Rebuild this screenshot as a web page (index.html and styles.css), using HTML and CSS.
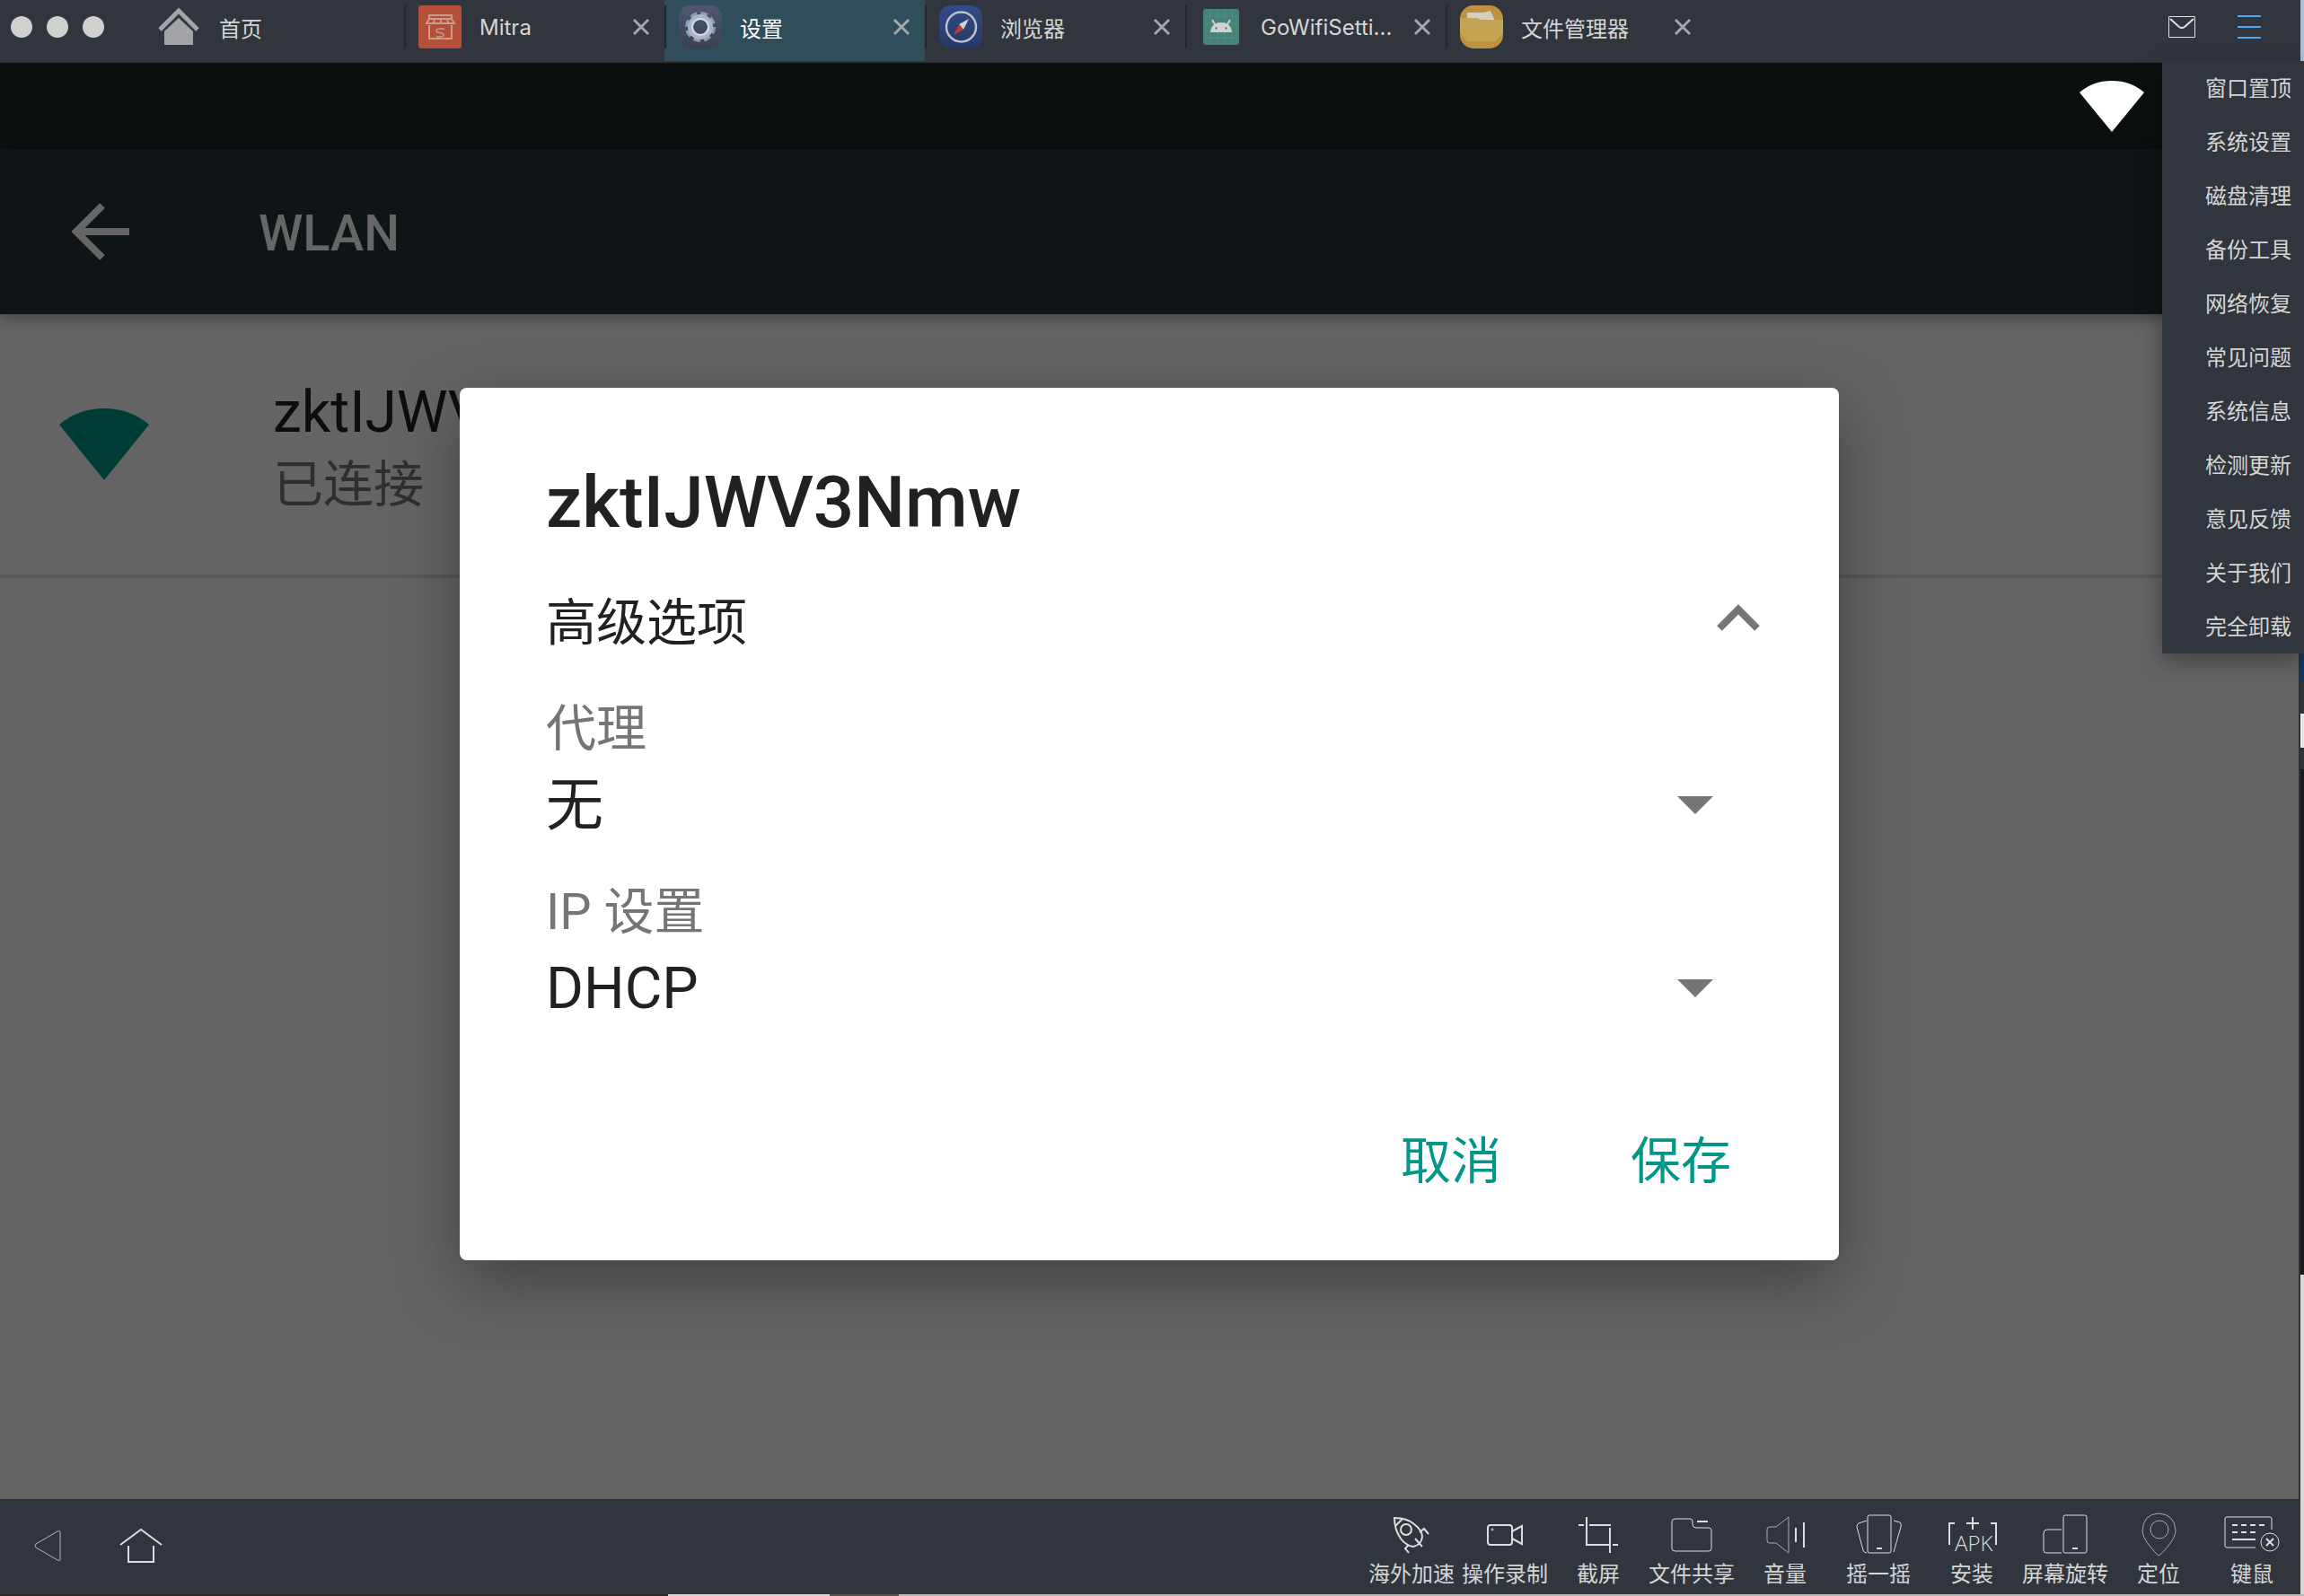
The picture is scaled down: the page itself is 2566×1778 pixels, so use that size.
FILE: index.html
```html
<!DOCTYPE html>
<html lang="zh-CN">
<head>
<meta charset="utf-8">
<title>WLAN</title>
<link rel="stylesheet" href="styles.css">
</head>
<body class="desktop">
<div class="window">
  <header class="titlebar">
    <div class="window-controls">
      <button class="dot" aria-label="关闭"></button>
      <button class="dot" aria-label="最小化"></button>
      <button class="dot" aria-label="缩放"></button>
    </div>
    <nav class="tabs">
      <div class="tab tab-home">
        <button class="tab-main">
          <svg class="tab-icon" viewBox="0 0 48 48"><path d="M2 27 23 6 44 27" fill="none" stroke="#a2a4a7" stroke-width="5"/><path d="M23 14 39 29V44H7V29Z" fill="#a2a4a7"/></svg>
          <span>首页</span>
        </button>
      </div>
      <div class="tab">
        <button class="tab-main">
          <svg class="tab-icon" viewBox="0 0 48 48"><rect width="48" height="48" rx="3" fill="#b4503a"/><g fill="none" stroke="#cf9a8e" stroke-width="2"><path d="M12 11H37V15H12ZM12 15 9 20H40L37 15M12 22V37H37V22M18 15l-1 5M25 15v5M32 15l1 5"/><path d="M29 26H24Q20 26 20 28T24 30.500T28 33T24 35H20" stroke-width="1.500"/></g></svg>
          <span>Mitra</span>
        </button>
        <button class="tab-close" aria-label="关闭 Mitra"><svg viewBox="0 0 20 20"><path d="M2 2 18 18M18 2 2 18"/></svg></button>
      </div>
      <div class="tab tab-active">
        <button class="tab-main">
          <svg class="tab-icon" viewBox="0 0 48 48"><defs><linearGradient id="gear-bg" x2="0" y2="1"><stop stop-color="#505770"/><stop offset="1" stop-color="#3b4150"/></linearGradient></defs><rect width="48" height="48" rx="13" fill="url(#gear-bg)"/><circle cx="24" cy="24" r="14" fill="none" stroke="#8c9ab6" stroke-width="6" stroke-dasharray="7 4"/><circle cx="24" cy="24" r="11" fill="none" stroke="#a9b4ca" stroke-width="6"/><circle cx="24" cy="24" r="9" fill="none" stroke="#dadde6" stroke-width="2"/></svg>
          <span>设置</span>
        </button>
        <button class="tab-close" aria-label="关闭 设置"><svg viewBox="0 0 20 20"><path d="M2 2 18 18M18 2 2 18"/></svg></button>
      </div>
      <div class="tab">
        <button class="tab-main">
          <svg class="tab-icon" viewBox="0 0 48 48"><defs><linearGradient id="nav-bg" x2="0" y2="1"><stop stop-color="#334b86"/><stop offset="1" stop-color="#273863"/></linearGradient></defs><rect width="48" height="48" rx="13" fill="url(#nav-bg)"/><circle cx="24.500" cy="24" r="16.500" fill="none" stroke="#b8c0cf" stroke-width="2.500"/><path d="M33 15 22 21 27 27Z" fill="#cfd3da"/><path d="M16 33 22 21 27 27Z" fill="#bd3a32"/></svg>
          <span>浏览器</span>
        </button>
        <button class="tab-close" aria-label="关闭 浏览器"><svg viewBox="0 0 20 20"><path d="M2 2 18 18M18 2 2 18"/></svg></button>
      </div>
      <div class="tab">
        <button class="tab-main">
          <svg class="tab-icon" viewBox="0 0 48 48"><rect x="4" y="4" width="40" height="40" rx="3" fill="#468279"/><path d="M4 12H44M4 20H44M4 28H44M4 36H44M12 4V44M20 4V44M28 4V44M36 4V44" stroke="#528d84" stroke-width="1"/><path d="M12 30Q13 19 24 19T36 30Z" fill="#cfd3d1"/><path d="M17 21 14 16M31 21 34 16" stroke="#cfd3d1" stroke-width="2"/><circle cx="18.500" cy="25.500" r="1.200" fill="#468279"/><circle cx="29.500" cy="25.500" r="1.200" fill="#468279"/></svg>
          <span>GoWifiSetti...</span>
        </button>
        <button class="tab-close" aria-label="关闭 GoWifiSetti"><svg viewBox="0 0 20 20"><path d="M2 2 18 18M18 2 2 18"/></svg></button>
      </div>
      <div class="tab">
        <button class="tab-main">
          <svg class="tab-icon" viewBox="0 0 48 48"><defs><linearGradient id="folder-bg" x2="0" y2="1"><stop stop-color="#c3a25a"/><stop offset="1" stop-color="#c3a84c"/></linearGradient></defs><rect width="48" height="48" rx="15" fill="#bd9140"/><path d="M8 8H26L34 6 38 15V19H8Z" fill="#d5cfbd"/><path d="M0 14H19L23 16H48V30L40 40H8L0 30Z" fill="url(#folder-bg)"/></svg>
          <span>文件管理器</span>
        </button>
        <button class="tab-close" aria-label="关闭 文件管理器"><svg viewBox="0 0 20 20"><path d="M2 2 18 18M18 2 2 18"/></svg></button>
      </div>
    </nav>
    <div class="title-actions">
      <button class="title-action" aria-label="消息"><svg width="30" height="24" viewBox="0 0 30 24" fill="none" stroke="#e0e0e0"><path d="M.5 .5H29.500V23.500H.5Z"/><path d="M2 3 12 12Q15 14 18 12L28 3" stroke-width="2"/></svg></button>
      <button class="title-action" aria-label="菜单"><svg width="26" height="26" viewBox="0 0 26 26"><path d="M0 1H26M0 13H26M0 25H26" stroke="#45aaf8" stroke-width="2"/></svg></button>
    </div>
  </header>

  <ul class="menu">
    <li><button class="menu-item">窗口置顶</button></li>
    <li><button class="menu-item">系统设置</button></li>
    <li><button class="menu-item">磁盘清理</button></li>
    <li><button class="menu-item">备份工具</button></li>
    <li><button class="menu-item">网络恢复</button></li>
    <li><button class="menu-item">常见问题</button></li>
    <li><button class="menu-item">系统信息</button></li>
    <li><button class="menu-item">检测更新</button></li>
    <li><button class="menu-item">意见反馈</button></li>
    <li><button class="menu-item">关于我们</button></li>
    <li><button class="menu-item">完全卸载</button></li>
  </ul>

  <main class="device">
    <div class="status">
      <svg width="72" height="57" viewBox="0 0 72 57"><path d="M36 57 0 13Q15 0 36 0T72 13Z" fill="#fff"/></svg>
    </div>
    <div class="screen">
      <div class="appbar">
        <button class="back" aria-label="返回"><svg width="64" height="64" viewBox="0 0 64 64"><path d="M34 3 5 32 34 61M5 32H64" fill="none" stroke="#fff" stroke-width="8"/></svg></button>
        <h1 class="appbar-title">WLAN</h1>
      </div>
      <div class="network">
        <svg class="network-signal" width="100" height="80" viewBox="0 0 100 80"><path d="M50 80 0 18Q21 0 50 0T100 18Z" fill="#009688"/></svg>
        <div>
          <div class="network-name">zktIJWV3Nmw</div>
          <div class="network-state">已连接</div>
        </div>
      </div>
      <div class="scrim">
        <form class="dialog" role="dialog" aria-labelledby="dialog-title">
          <h2 class="dialog-title" id="dialog-title">zktIJWV3Nmw</h2>
          <button class="advanced" type="button" aria-expanded="true">
            <span>高级选项</span>
            <svg width="48" height="32" viewBox="0 0 48 32"><path d="M3 28 24 7 45 28" fill="none" stroke="#757575" stroke-width="8"/></svg>
          </button>
          <div class="field">
            <label class="field-label" for="proxy">代理</label>
            <select class="field-select" id="proxy"><option>无</option></select>
          </div>
          <div class="field">
            <label class="field-label" for="ip">IP 设置</label>
            <select class="field-select" id="ip"><option>DHCP</option></select>
          </div>
          <div class="dialog-actions">
            <button class="text-button" type="button">取消</button>
            <button class="text-button" type="button">保存</button>
          </div>
        </form>
      </div>
    </div>
  </main>

  <footer class="toolbar">
    <button class="tool" aria-label="后退"><svg class="tool-icon" viewBox="0 0 64 52"><path d="M47 10V42Q46 43 44 42L20 28Q18 26 20 24L44 10Q46 9 47 10Z" stroke="#b5b7b9"/></svg></button>
    <button class="tool" aria-label="主页"><svg class="tool-icon" viewBox="0 0 64 52"><path d="M10 25 33 8 56 25M19 26V44H47V26" stroke-width="2"/></svg></button>
    <div class="tools">
      <button class="tool"><svg class="tool-icon" viewBox="0 0 64 52"><g stroke-width="2"><path d="M13 7Q13 20 20 30Q26 38 34 39Q43 37 44 28Q44 21 35 14Q27 7 13 7ZM14 16 22 8M36 30 44 39M41 23 46 19 51 25M29 37 25 41 29 46"/><circle cx="26" cy="20" r="6"/></g></svg><span>海外加速</span></button>
      <button class="tool"><svg class="tool-icon" viewBox="0 0 64 52"><g stroke-width="2"><rect x="13" y="15" width="27" height="22" rx="3"/><path d="M40 22 51 16V36L40 30"/></g><circle cx="18" cy="20" r="1"/></svg><span>操作录制</span></button>
      <button class="tool"><svg class="tool-icon" viewBox="0 0 64 52"><path d="M10 15H16M22 15H46M19 6V37H45M48 37H54M45 18V46" stroke-width="2"/></svg><span>截屏</span></button>
      <button class="tool"><svg class="tool-icon" viewBox="0 0 64 52"><path d="M14 8H30Q33 8 33 11V14Q33 18 37 18H51Q54 18 54 21V41Q54 44 51 44H14Q10 44 10 41V11Q10 8 14 8Z"/><path d="M38 11H50" stroke-width="2"/></svg><span>文件共享</span></button>
      <button class="tool"><svg class="tool-icon" viewBox="0 0 64 52"><path d="M36 6V46L22 35H15Q12 35 12 32V20Q12 17 15 17H22Z" stroke="#a8aaac"/><path d="M44 18V34M53 12V40" stroke-width="2"/></svg><span>音量</span></button>
      <button class="tool"><svg class="tool-icon" viewBox="0 0 64 52"><rect x="20" y="4" width="26" height="42" rx="2"/><path d="M19 10 10 13Q8 14 8 17L15 43Q16 46 19 46M49 10 56 12Q58 13 57 17L49 45"/><path d="M30 41H36" stroke-width="2"/></svg><span>摇一摇</span></button>
      <button class="tool"><svg class="tool-icon" viewBox="0 0 64 52"><path d="M13 13H7V37M53 13H59V37M26 13H40M33 6V20" stroke-width="2"/><text class="apk" x="13" y="44">APK</text></svg><span>安装</span></button>
      <button class="tool"><svg class="tool-icon" viewBox="0 0 64 52"><rect x="30" y="4" width="26" height="42" rx="2"/><path d="M28 20H12Q8 20 8 24V43Q8 46 11 46H28"/><path d="M40 41H46" stroke-width="2"/></svg><span>屏幕旋转</span></button>
      <button class="tool"><svg class="tool-icon" viewBox="0 0 64 52"><g stroke="#a8aaac"><path d="M32 49Q28 46 22 38Q14 28 14 21Q15 3 32 2Q50 3 51 21Q51 28 43 38Q36 47 32 49Z"/><circle cx="33" cy="20" r="10"/></g></svg><span>定位</span></button>
      <button class="tool"><svg class="tool-icon" viewBox="0 0 64 52"><path d="M36 40H4Q2 40 2 38V8Q2 6 4 6H52Q54 6 54 8V20"/><circle cx="52" cy="34" r="10"/><path d="M10 15H46M10 23H37" stroke-width="2" stroke-dasharray="6 4"/><path d="M10 31H36M48 30 56 38M56 30 48 38" stroke-width="2"/></svg><span>键鼠</span></button>
    </div>
  </footer>
</div>
</body>
</html>
```
FILE: styles.css
```css
* {
  box-sizing: border-box;
}

body {
  margin: 0;
}

button {
  margin: 0;
  padding: 0;
  border: 0;
  background: none;
  font: inherit;
  color: inherit;
  white-space: nowrap;
}

svg {
  display: block;
  flex: none;
}

/* What shows of the desktop round the window */
.desktop {
  min-height: 100vh;
  display: flex;
  padding: 0 4px 2px 0;
  background:
    linear-gradient(90deg, #2b2727 0 29%, #d8d8d8 29% 36%, #55524f 36% 39%, #b9b9b9 39%) left bottom / 100% 2px no-repeat,
    linear-gradient(180deg, #a9bfdb 0 68px, #0c3a66 68px 760px, #303436 760px 795px, #e8e8e8 795px 833px, #303436 833px 857px, #1b1b1d 857px 1420px, #d8d8d8 1420px);
  font-family: Inter, "Noto Sans CJK SC", sans-serif;
  font-size: 24px;
  color: #d4d6d6;
}

.window {
  position: relative;
  flex: 1;
  min-width: 0;
  display: flex;
  flex-direction: column;
  background: #31353d;
}

/* Title bar */
.titlebar {
  display: flex;
  height: 70px;
  border-bottom: 2px solid #2c3135;
}

.window-controls {
  flex: none;
  width: 160px;
  height: 60px;
  display: flex;
  align-items: center;
  gap: 16px;
  padding-left: 12px;
}

.dot {
  width: 24px;
  height: 24px;
  border-radius: 50%;
  background: #d0d0d0;
}

.tabs {
  flex: 1;
  min-width: 0;
  display: flex;
}

.tab {
  flex: 0 1 290px;
  display: flex;
  align-items: center;
  justify-content: space-between;
  padding: 6px 16px 14px;
  background: linear-gradient(#24272b, #24272b) left 6px / 2px 48px no-repeat;
}

.tab-home {
  background: none;
}

.tab-active {
  background-color: #304d5b;
  color: #fff;
}

.tab-main {
  display: flex;
  align-items: center;
  gap: 20px;
}

.tab-icon {
  width: 48px;
  height: 48px;
}

.tab-close svg {
  width: 20px;
  height: 20px;
  fill: none;
  stroke: #a5a8ab;
  stroke-width: 3;
}

.title-actions {
  display: flex;
  align-items: center;
  height: 60px;
  gap: 47px;
  padding-right: 44px;
}

/* Drop-down menu under the title bar */
.menu {
  position: absolute;
  z-index: 2;
  top: 68px;
  right: -4px;
  margin: 0;
  padding: 0;
  list-style: none;
  background: #31353d;
  box-shadow: 0 8px 24px rgba(0, 0, 0, .35);
}

.menu-item {
  display: block;
  height: 60px;
  padding: 0 14px 4px 48px;
}

/* Device */
.device {
  flex: 1;
  display: flex;
  flex-direction: column;
  border-right: 2px solid #2c3135;
  font-family: Roboto, "Noto Sans CJK SC", sans-serif;
}

.status {
  display: flex;
  justify-content: flex-end;
  height: 96px;
  padding: 20px 172px 0 0;
  background: #0c0f10;
}

.screen {
  position: relative;
  flex: 1;
  background: #fafafa;
}

.appbar {
  display: flex;
  align-items: center;
  gap: 144px;
  height: 184px;
  padding-left: 80px;
  background: #263238;
  box-shadow: 0 4px 16px rgba(0, 0, 0, .35);
}

.appbar-title {
  margin: 0;
  padding-top: 4px;
  font-size: 56px;
  line-height: 80px;
  font-weight: 500;
  color: #fff;
}

.network {
  display: flex;
  align-items: center;
  gap: 138px;
  padding: 70px 66px 60px;
  border-bottom: 4px solid #dcdcdc;
}

.network-signal {
  margin-bottom: 10px;
}

.network-name {
  font-size: 64px;
  line-height: 80px;
  color: #212121;
}

.network-state {
  font-size: 56px;
  line-height: 80px;
  color: #757575;
}

.scrim {
  position: absolute;
  inset: 0;
  display: flex;
  align-items: center;
  justify-content: center;
  background: rgba(0, 0, 0, .6);
}

.dialog {
  width: 60%;
  padding: 80px 96px 68px;
  border-radius: 8px;
  background: #fff;
  box-shadow: 0 24px 72px rgba(0, 0, 0, .35);
  color: #212121;
}

.dialog-title {
  margin: 0;
  font-size: 80px;
  line-height: 96px;
  font-weight: 500;
}

.advanced {
  display: flex;
  align-items: center;
  justify-content: space-between;
  width: calc(100% + 8px);
  height: 112px;
  margin: 24px 0 28px;
  font-size: 56px;
}

.field {
  display: flex;
  flex-direction: column;
  margin-bottom: 32px;
}

.field-label {
  font-size: 56px;
  line-height: 80px;
  color: #757575;
}

.field-select {
  appearance: none;
  height: 92px;
  margin: 0;
  padding: 0 0 2px;
  border: 0;
  border-radius: 0;
  background: url("data:image/svg+xml,%3Csvg xmlns='http://www.w3.org/2000/svg' width='40' height='20'%3E%3Cpath d='M0 0H40L20 20Z' fill='%23757575'/%3E%3C/svg%3E") right 44px top 35px no-repeat;
  font: inherit;
  font-size: 64px;
  color: inherit;
}

.dialog-actions {
  display: flex;
  justify-content: flex-end;
  gap: 96px;
  padding-top: 60px;
}

.text-button {
  height: 96px;
  padding: 0 24px;
  font-size: 56px;
  color: #009688;
}

/* Bottom toolbar */
.toolbar {
  display: flex;
  height: 106px;
  padding-right: 2px;
  border-top: 2px solid #2c3135;
}

.tools {
  display: flex;
  margin-left: auto;
}

.tool {
  display: flex;
  flex-direction: column;
  align-items: center;
  justify-content: center;
  width: 104px;
  padding-bottom: 4px;
  line-height: 36px;
}

.tools .tool {
  padding: 8px 0 0;
}

.tool-icon {
  width: 64px;
  height: 52px;
  fill: none;
  stroke: #dcdede;
  stroke-width: 1;
}

.apk {
  font: 300 24px "Open Sans", sans-serif;
  fill: #dcdede;
  stroke: none;
}
```
